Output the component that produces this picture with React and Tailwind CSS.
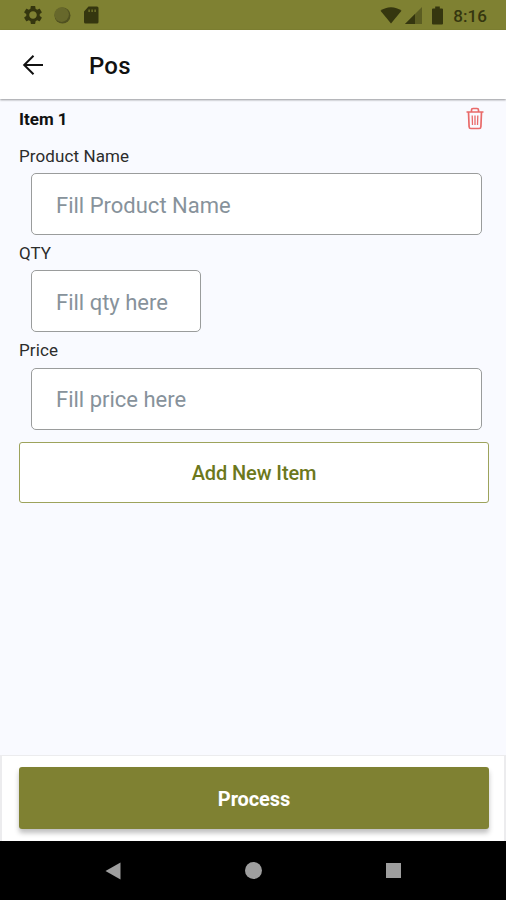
import React, { useState } from 'react';

function StatusBar() {
  return (
    <div className="flex h-[30px] shrink-0 items-center bg-[#7f8132] pl-6 pr-[19px] text-[#35360f]">
      <svg width="18" height="18" viewBox="2 2 20 20" fill="currentColor" className="shrink-0">
        <path d="M19.43 12.98c.04-.32.07-.64.07-.98s-.03-.66-.07-.98l2.11-1.65c.19-.15.24-.42.12-.64l-2-3.46c-.12-.22-.39-.3-.61-.22l-2.49 1c-.52-.4-1.08-.73-1.69-.98l-.38-2.65C14.46 2.18 14.25 2 14 2h-4c-.25 0-.46.18-.49.42l-.38 2.65c-.61.25-1.17.59-1.69.98l-2.49-1c-.23-.09-.49 0-.61.22l-2 3.46c-.13.22-.07.49.12.64l2.11 1.65c-.04.32-.07.65-.07.98s.03.66.07.98l-2.11 1.65c-.19.15-.24.42-.12.64l2 3.46c.12.22.39.3.61.22l2.49-1c.52.4 1.08.73 1.69.98l.38 2.65c.03.24.24.42.49.42h4c.25 0 .46-.18.49-.42l.38-2.65c.61-.25 1.17-.59 1.69-.98l2.49 1c.23.09.49 0 .61-.22l2-3.46c.12-.22.07-.49-.12-.64l-2.11-1.65zM12 16.2c-2.3 0-4.2-1.9-4.2-4.2s1.900-4.200 4.200-4.200 4.200 1.900 4.200 4.200-1.900 4.200-4.200 4.200z" />
      </svg>
      <svg width="18" height="18" viewBox="0 0 18 18" className="ml-[11px] shrink-0">
        <circle cx="9.500" cy="9.500" r="8" fill="#505120" />
        <circle cx="8.600" cy="8.600" r="7.300" fill="#67682b" />
      </svg>
      <svg width="16" height="18" viewBox="0 0 16 18" fill="currentColor" className="ml-3 shrink-0">
        <path
          fillRule="evenodd"
          d="M5.500 0.500H14a1.500 1.500 0 0 1 1.500 1.500v14A1.500 1.500 0 0 1 14 17.500H2.500A1.500 1.500 0 0 1 1 16V5.500zM5.500 3.500V6h1.200V3.500zm3 0V6h1.200V3.500zm3 0V6h1.200V3.500z"
        />
      </svg>
      <div className="ml-auto flex items-center">
        <svg width="22" height="18" viewBox="0 0 22 18" fill="currentColor">
          <path d="M0.500 4.800C6.500 0 15.500 0 21.500 4.800L11 17.500z" />
        </svg>
        <svg width="17" height="17" viewBox="0 0 17 17" className="ml-[3px]">
          <path d="M17 0v17H0z" fill="#5b5d22" />
          <path d="M10 7v10H0z" fill="currentColor" />
        </svg>
        <svg width="11" height="19" viewBox="0 0 11 19" fill="currentColor" className="ml-[10px]">
          <path d="M3.200 0.500h4.600v2H10a1 1 0 0 1 1 1v14a1 1 0 0 1-1 1H1a1 1 0 0 1-1-1v-14a1 1 0 0 1 1-1h2.200z" />
        </svg>
        <span className="ml-[10px] pt-[2px] text-[17px] font-medium leading-none tracking-[0.1px]">8:16</span>
      </div>
    </div>
  );
}

function TrashIcon() {
  return (
    <svg width="18" height="23" viewBox="0 0 18 23" fill="none" stroke="#e96a6a" strokeWidth="1.700">
      <path d="M0.500 5h17M5.500 5V3q0-1.500 1.500-1.500h4q1.500 0 1.500 1.500v2M2.500 5l.6 14.800q.1 1.700 1.700 1.700h8.400q1.600 0 1.700-1.700L15.500 5" />
      <path d="M6.200 8.500l.3 9.500M9 8.500V18M11.800 8.500l-.3 9.500" strokeWidth="1.300" />
    </svg>
  );
}

function Field({ label, placeholder, value, onChange, width }) {
  return (
    <label className="flex flex-col">
      <span className="flex h-[35.200px] items-center pt-px text-[17px] leading-none tracking-[0.1px] text-[#2c2c2c]">
        {label}
      </span>
      <input
        value={value}
        onChange={(e) => onChange(e.target.value)}
        placeholder={placeholder}
        className={`ml-3 h-[62px] rounded-[5px] border border-[#9a9c9c] bg-white px-6 pt-[2px] text-[22px] text-[#222] outline-none placeholder:text-[#87929b] ${width}`}
      />
    </label>
  );
}

export default function App() {
  const [item, setItem] = useState({ name: '', qty: '', price: '' });
  const update = (key) => (value) => setItem({ ...item, [key]: value });

  return (
    <div className="flex h-[900px] w-[506px] flex-col overflow-hidden bg-[#f9faff] font-[Roboto,sans-serif]">
      <StatusBar />

      <header className="z-10 flex h-[69px] shrink-0 items-center bg-white pl-[22px] shadow-[0_1px_2px_rgba(0,0,0,0.4)]">
        <svg width="22" height="22" viewBox="0 0 22 22" fill="none" stroke="#111" strokeWidth="2">
          <path d="M21 11H2.500M11.500 1.700L2.200 11l9.300 9.300" />
        </svg>
        <h1 className="ml-[45px] pt-[3px] text-[24px] font-medium leading-none tracking-[0.2px] text-[#111]">Pos</h1>
      </header>

      <main className="flex flex-1 flex-col px-[19px] pt-[7px]">
        <div className="flex h-[32px] items-start justify-between pr-[3px]">
          <h2 className="pt-[5px] text-[17px] font-bold leading-none text-[#111]">Item 1</h2>
          <button className="pt-px">
            <TrashIcon />
          </button>
        </div>
        <Field
          label="Product Name"
          placeholder="Fill Product Name"
          value={item.name}
          onChange={update('name')}
          width="w-[451px]"
        />
        <Field label="QTY" placeholder="Fill qty here" value={item.qty} onChange={update('qty')} width="w-[170px]" />
        <Field
          label="Price"
          placeholder="Fill price here"
          value={item.price}
          onChange={update('price')}
          width="w-[451px]"
        />
        <button className="mt-3 h-[61px] w-[470px] rounded-[3px] border border-[#9da35c] bg-white pt-px text-[20px] font-medium tracking-[-0.1px] text-[#6c781c]">
          Add New Item
        </button>
      </main>

      <footer className="h-[86px] shrink-0 border-x-2 border-t border-[#ececee] bg-white px-[17px] pt-[11px]">
        <button className="h-[62px] w-[470px] rounded-[3px] bg-[#7f8132] pt-[2px] text-[20px] font-bold tracking-[-0.1px] text-white shadow-[0_4px_5px_rgba(0,0,0,0.25)]">
          Process
        </button>
      </footer>

      <nav className="flex h-[59px] shrink-0 items-center bg-black pl-[105px]">
        <svg width="16" height="18" viewBox="0 0 16 18" fill="#9e9e9e">
          <path d="M15.500 0.500v17L0.500 9z" />
        </svg>
        <div className="ml-[124px] h-[17px] w-[17px] rounded-full bg-[#9e9e9e]" />
        <div className="ml-[124px] h-[15px] w-[15px] bg-[#9e9e9e]" />
      </nav>
    </div>
  );
}
